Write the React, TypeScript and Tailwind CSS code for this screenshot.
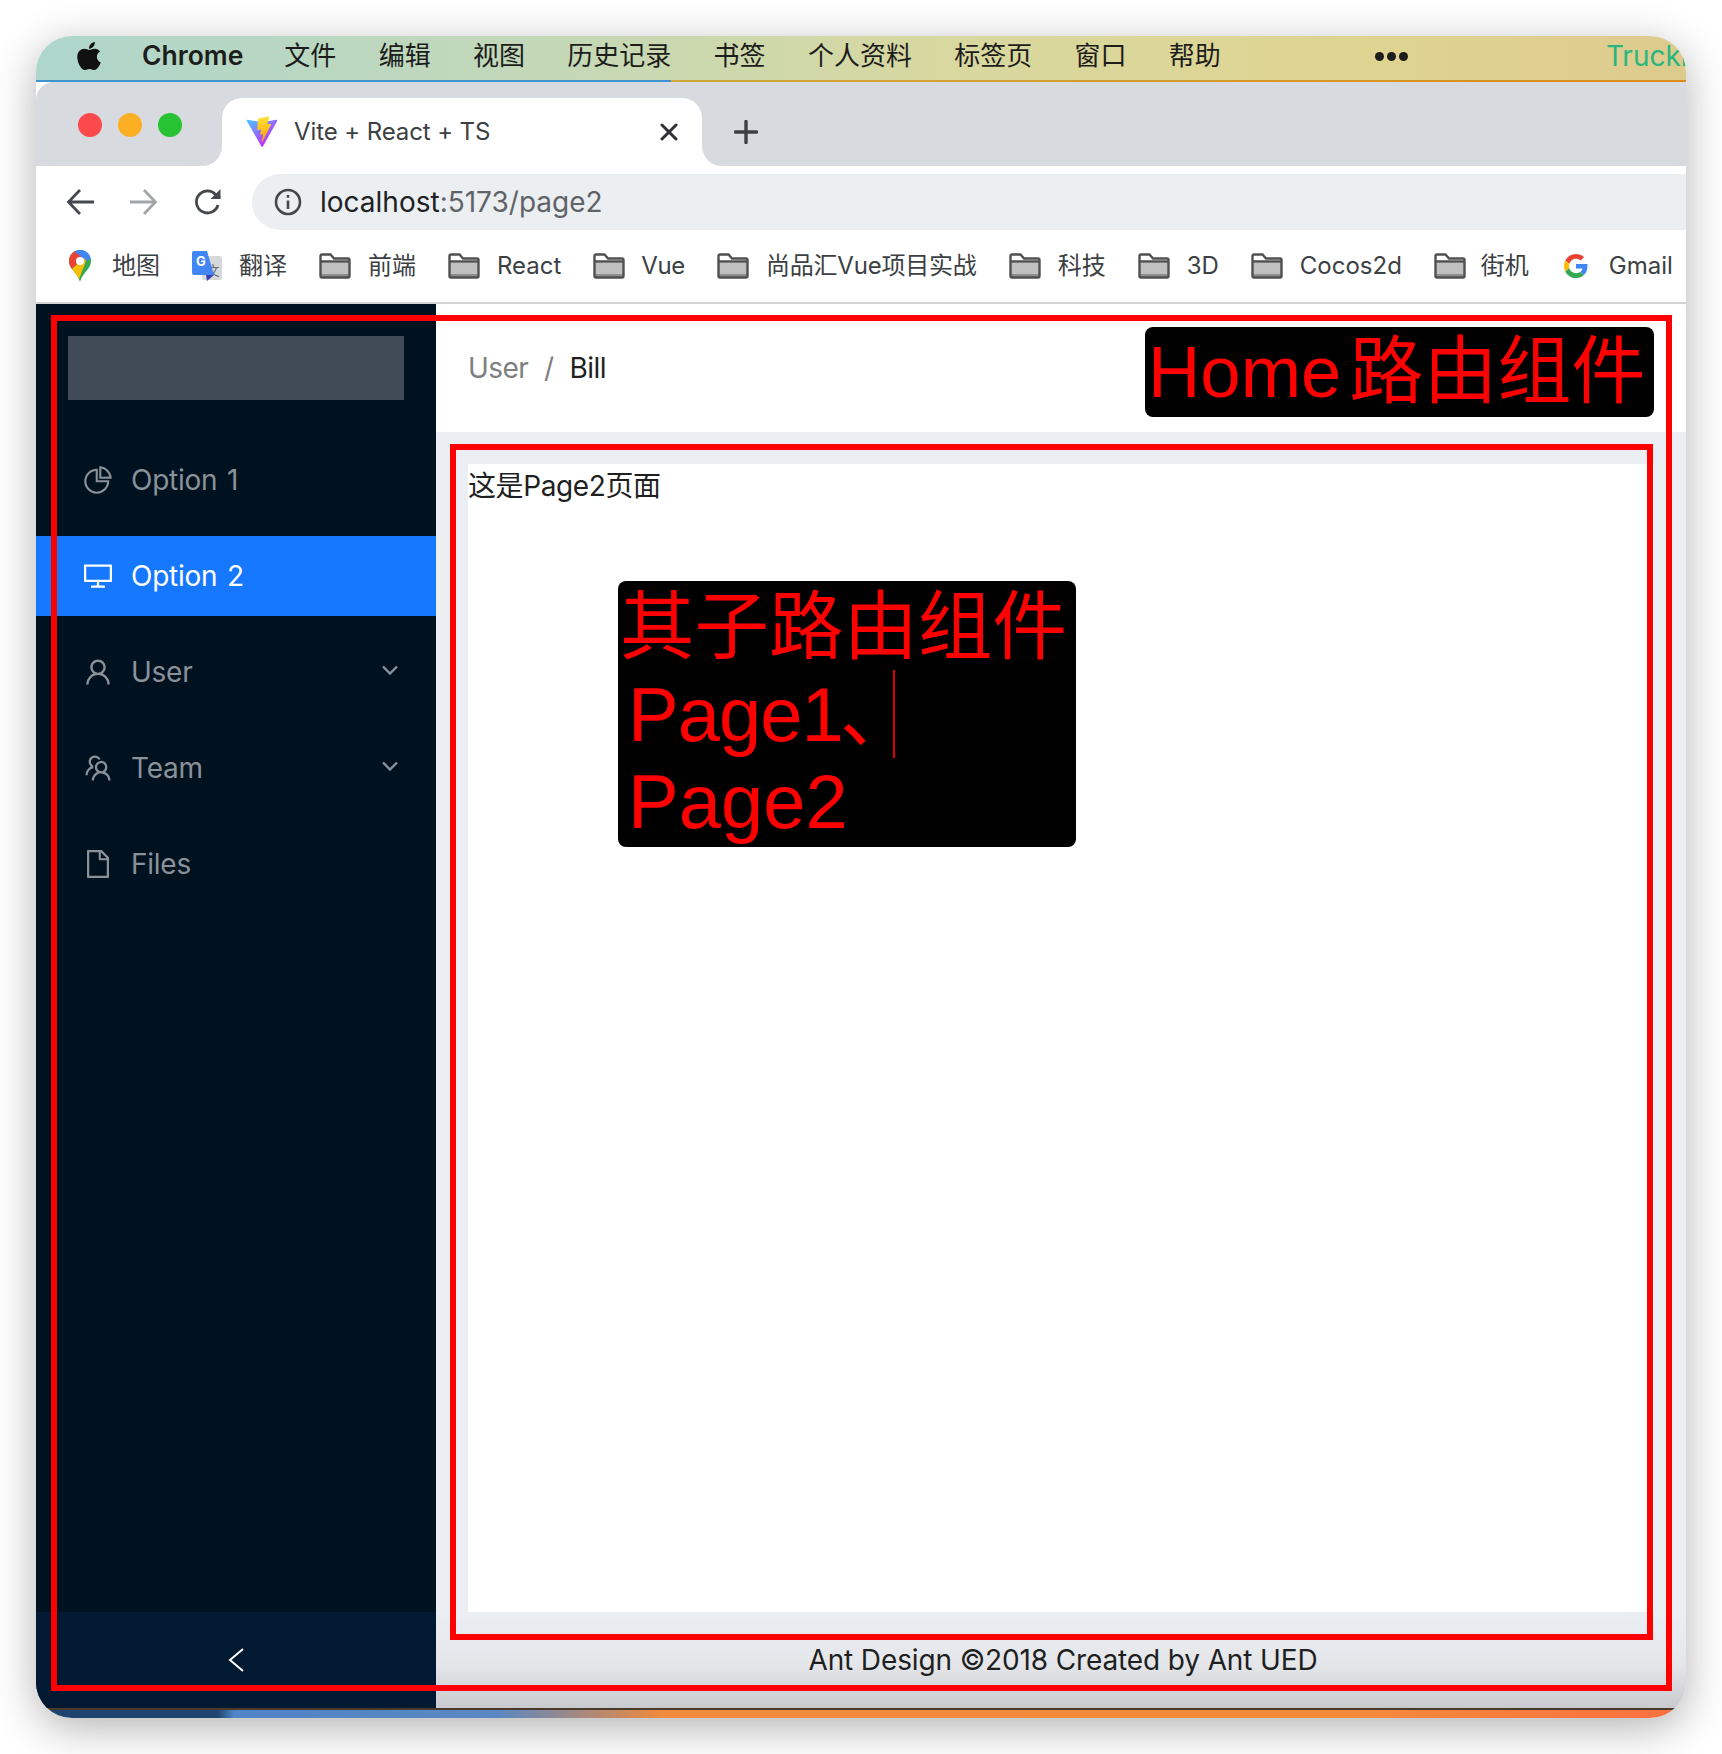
import { ReactNode } from 'react'
import { AiOutlineDesktop, AiOutlineFile, AiOutlinePieChart, AiOutlineTeam, AiOutlineUser } from 'react-icons/ai'
import { FaApple } from 'react-icons/fa'

const menuItems = ['文件', '编辑', '视图', '历史记录', '书签', '个人资料', '标签页', '窗口', '帮助']

function ViteLogo() {
  return (
    <svg viewBox="0 0 410 404" className="w-[32px] h-[32px]" fill="none">
      <defs>
        <linearGradient id="viteA" x1="6" y1="33" x2="235" y2="344" gradientUnits="userSpaceOnUse">
          <stop stopColor="#41D1FF" />
          <stop offset="1" stopColor="#BD34FE" />
        </linearGradient>
        <linearGradient id="viteB" x1="194.6" y1="8.8" x2="236" y2="292.9" gradientUnits="userSpaceOnUse">
          <stop stopColor="#FFEA83" />
          <stop offset="0.08" stopColor="#FFDD35" />
          <stop offset="1" stopColor="#FFA800" />
        </linearGradient>
      </defs>
      <path
        d="M399.641 59.5246L215.643 388.545C211.844 395.338 202.084 395.378 198.228 388.618L10.5817 59.5563C6.38087 52.1896 12.6802 43.2665 21.0281 44.7586L205.223 77.6824C206.398 77.8924 207.601 77.8904 208.776 77.6763L389.119 44.8058C397.439 43.2894 403.768 52.1434 399.641 59.5246Z"
        fill="url(#viteA)"
      />
      <path
        d="M292.965 1.5744L156.801 28.2552C154.563 28.6937 152.906 30.5903 152.771 32.8664L144.395 174.33C144.198 177.662 147.258 180.248 150.51 179.498L188.42 170.749C191.967 169.931 195.172 173.055 194.443 176.622L183.18 231.775C182.422 235.487 185.907 238.661 189.532 237.56L212.947 230.446C216.577 229.344 220.065 232.527 219.297 236.242L201.398 322.875C200.278 328.294 207.486 331.249 210.492 326.603L212.5 323.5L323.454 102.072C325.312 98.3645 322.108 94.137 318.036 94.9228L279.014 102.454C275.347 103.161 272.227 99.746 273.262 96.1583L298.731 7.86689C299.767 4.27314 296.636 0.855181 292.965 1.5744Z"
        fill="url(#viteB)"
      />
    </svg>
  )
}

function MapsPin() {
  return (
    <svg viewBox="0 0 22 32" className="w-[22px] h-[32px]">
      <defs>
        <clipPath id="pinClip">
          <path d="M11 0C4.9 0 0 4.9 0 11c0 3.2 1.2 5.6 3 8 3 3.8 6.2 7 8 13 1.8-6 5-9.2 8-13 1.8-2.4 3-4.8 3-8C22 4.9 17.1 0 11 0z" />
        </clipPath>
      </defs>
      <g clipPath="url(#pinClip)">
        <rect width="22" height="32" fill="#34A853" />
        <path d="M3 -1H24V7L16 12L8 6z" fill="#4285F4" />
        <path d="M-1 3L3 -1L9 4L14 9L3 19L-1 16z" fill="#EA4335" />
        <path d="M3 19L15 8L17 11L9 32H3z" fill="#FBBC05" />
        <path d="M17 7L24 3V-1H12L7 3z" fill="#4285F4" />
      </g>
      <circle cx="11" cy="11" r="4" fill="#fff" />
    </svg>
  )
}

function TranslateIcon() {
  return (
    <svg viewBox="0 0 30 30" className="w-[30px] h-[30px]">
      <rect x="10" y="5" width="20" height="24" rx="2" fill="#d6d8da" />
      <text x="21" y="24" fontSize="13" textAnchor="middle" fill="#5f6b73" fontFamily="'Noto Sans CJK SC', sans-serif">
        文
      </text>
      <path d="M2 0H15L22 24H2a2 2 0 0 1-2-2V2a2 2 0 0 1 2-2z" fill="#4285F4" />
      <path d="M14 24H22L15 30z" fill="#3B3FB5" />
      <text x="9" y="15" fontSize="13" fontWeight="700" textAnchor="middle" fill="#fff" fontFamily="Inter, sans-serif">
        G
      </text>
    </svg>
  )
}

function FolderIcon() {
  return (
    <svg viewBox="0 0 32 26" className="w-[32px] h-[26px] shrink-0">
      <path d="M2 10H30V23a1.5 1.5 0 0 1-1.5 1.5H3.500A1.500 1.500 0 0 1 2 23z" fill="#c0c0c0" />
      <path d="M2 21H30V24H2z" fill="#8e8e8e" />
      <path
        d="M1.500 8.500V3A1.500 1.500 0 0 1 3 1.500H11.500L15 5.500H29A1.500 1.500 0 0 1 30.500 7V23A1.500 1.500 0 0 1 29 24.500H3A1.500 1.500 0 0 1 1.500 23V8.500H30.500"
        fill="none"
        stroke="#505050"
        strokeWidth="2.400"
      />
    </svg>
  )
}

function GoogleG() {
  return (
    <svg viewBox="0 0 48 48" className="ml-[3px] w-[24px] h-[24px]">
      <path fill="#EA4335" d="M24 9.5c3.54 0 6.71 1.22 9.21 3.6l6.85-6.85C35.9 2.38 30.47 0 24 0 14.62 0 6.51 5.38 2.56 13.22l7.98 6.19C12.43 13.72 17.74 9.5 24 9.5z" />
      <path fill="#4285F4" d="M46.98 24.55c0-1.57-.15-3.09-.38-4.55H24v9.02h12.94c-.58 2.96-2.26 5.48-4.78 7.18l7.73 6c4.51-4.18 7.09-10.36 7.09-17.65z" />
      <path fill="#FBBC05" d="M10.53 28.59c-.48-1.45-.76-2.99-.76-4.59s.27-3.14.76-4.59l-7.98-6.19C.92 16.46 0 20.12 0 24c0 3.88.92 7.54 2.56 10.78l7.97-6.19z" />
      <path fill="#34A853" d="M24 48c6.48 0 11.93-2.13 15.89-5.81l-7.73-6c-2.15 1.45-4.92 2.3-8.16 2.3-6.26 0-11.57-4.22-13.47-9.91l-7.98 6.19C6.51 42.62 14.62 48 24 48z" />
    </svg>
  )
}

function Bookmark({ icon, label, labelClass = 'ml-[17px]' }: { icon: ReactNode; label: string; labelClass?: string }) {
  return (
    <div className="flex items-center shrink-0">
      {icon}
      <span className={`${labelClass} text-[24px] leading-[32px] text-[#3c4043] whitespace-nowrap`}>{label}</span>
    </div>
  )
}

function SideItem({ icon, label, active, arrow }: { icon: ReactNode; label: string; active?: boolean; arrow?: boolean }) {
  return (
    <div
      className={
        active
          ? 'flex items-center h-[80px] pl-[46px] gap-[17px] bg-[#1677ff] text-white'
          : 'flex items-center h-[80px] pl-[46px] gap-[17px] text-[#8a9199]'
      }
    >
      <span className="text-[32px] w-[32px] h-[32px] flex items-center justify-center">{icon}</span>
      <span className="text-[28px] leading-[44px] tracking-[-0.25px] [word-spacing:2px]">{label}</span>
      {arrow && (
        <svg viewBox="0 0 16 10" className="ml-auto mr-[38px] w-[16px] h-[10px] -mt-[4px]" fill="none" stroke="#8a9199" strokeWidth="2.400">
          <path d="M1 1.500L8 8.500L15 1.500" />
        </svg>
      )}
    </div>
  )
}

export default function App() {
  return (
    <div className="w-[1722px] h-[1754px] bg-white overflow-hidden pt-[36px] pl-[36px] font-['Inter','Noto_Sans_CJK_SC',sans-serif]">
      <div className="relative w-[1650px] h-[1682px] rounded-[36px] overflow-hidden flex flex-col shadow-[0_10px_44px_rgba(0,0,0,0.3)] bg-white">
        {/* Mac menu bar */}
        <div className="h-[44px] shrink-0 flex items-center overflow-hidden pb-[4px] text-[#1d1d1b] bg-[linear-gradient(90deg,#aed6cc_0%,#c3d8b8_30%,#d8d8a0_55%,#dfd491_80%,#ddcb8e_100%)]">
          <FaApple className="ml-[38px] w-[30px] h-[32px] shrink-0 text-[#111]" />
          <span className="ml-[38px] text-[26.500px] font-semibold mr-[41px] shrink-0">Chrome</span>
          <div className="flex shrink-0 gap-[42.3px] text-[26px] leading-[36px] whitespace-nowrap">
            {menuItems.map((item) => (
              <span key={item}>{item}</span>
            ))}
          </div>
          <div className="ml-[154px] flex shrink-0 gap-[3px]">
            <span className="w-[9px] h-[9px] rounded-full bg-[#1d1d1b]" />
            <span className="w-[9px] h-[9px] rounded-full bg-[#1d1d1b]" />
            <span className="w-[9px] h-[9px] rounded-full bg-[#1d1d1b]" />
          </div>
          <span className="ml-[198px] shrink-0 text-[28px] text-[#2bb67f] whitespace-nowrap">Trucki</span>
        </div>
        <div className="h-[2px] shrink-0 bg-[linear-gradient(90deg,#3f93d0_0%,#3f93d0_38.500%,#cfa93a_38.500%,#dc8a1c_100%)]" />

        {/* Tab strip */}
        <div className="h-[84px] shrink-0 bg-[#d7dade] rounded-tl-[18px] flex items-end">
          <div className="flex gap-[16px] ml-[42px] mb-[29px]">
            <span className="w-[24px] h-[24px] rounded-full bg-[#fc4a4c]" />
            <span className="w-[24px] h-[24px] rounded-full bg-[#fdb024]" />
            <span className="w-[24px] h-[24px] rounded-full bg-[#27c332]" />
          </div>
          <div className="relative ml-[40px] w-[480px] h-[68px] bg-white rounded-t-[20px] flex items-center pl-[24px]">
            <span className="absolute -left-[20px] bottom-0 w-[20px] h-[20px] bg-white">
              <span className="block w-[20px] h-[20px] bg-[#d7dade] rounded-br-[20px]" />
            </span>
            <span className="absolute -right-[20px] bottom-0 w-[20px] h-[20px] bg-white">
              <span className="block w-[20px] h-[20px] bg-[#d7dade] rounded-bl-[20px]" />
            </span>
            <ViteLogo />
            <span className="ml-[16px] text-[24px] leading-[32px] tracking-[-0.1px] text-[#3c4043]">Vite + React + TS</span>
            <svg viewBox="0 0 18 18" className="ml-auto mr-[24px] w-[18px] h-[18px]" stroke="#303134" strokeWidth="3" strokeLinecap="round">
              <path d="M2 2L16 16M16 2L2 16" />
            </svg>
          </div>
          <svg viewBox="0 0 24 24" className="ml-[32px] mb-[22px] w-[24px] h-[24px]" stroke="#3c4043" strokeWidth="3.400" strokeLinecap="round">
            <path d="M12 1.500V22.500M1.500 12H22.500" />
          </svg>
        </div>

        {/* Toolbar */}
        <div className="h-[64px] shrink-0 bg-white flex items-center pt-[8px]">
          <svg viewBox="0 0 28 26" className="ml-[30px] w-[28px] h-[26px]" fill="none" stroke="#45494d" strokeWidth="2.800">
            <path d="M28 13H3M14 1L2.500 13L14 25" />
          </svg>
          <svg viewBox="0 0 28 26" className="ml-[36px] w-[28px] h-[26px]" fill="none" stroke="#a3a6a9" strokeWidth="2.800">
            <path d="M0 13H25M14 1L25.500 13L14 25" />
          </svg>
          <svg viewBox="0 0 28 28" className="ml-[36px] w-[28px] h-[28px]" fill="none" stroke="#45494d" strokeWidth="2.800">
            <path d="M24 17a11 11 0 1 1-2.500-10.500L26 10" />
            <path d="M26.500 1V11H16.500" fill="#45494d" stroke="none" />
          </svg>
          <div className="ml-[30px] flex-1 h-[56px] bg-[#eceff1] rounded-l-[28px] flex items-center pl-[22px]">
            <svg viewBox="0 0 28 28" className="w-[28px] h-[28px]" fill="none" stroke="#45494d" strokeWidth="2.600">
              <circle cx="14" cy="14" r="12" />
              <path d="M14 12.500V21" />
              <path d="M14 7V9.800" />
            </svg>
            <span className="ml-[18px] text-[28px] leading-[40px] text-[#5f6368]">
              <span className="text-[#202124]">localhost</span>:5173/page2
            </span>
          </div>
        </div>

        {/* Bookmarks */}
        <div className="h-[72px] shrink-0 bg-white flex items-center gap-[32px] pl-[33px] overflow-hidden">
          <Bookmark icon={<MapsPin />} label="地图" labelClass="ml-[21px]" />
          <Bookmark icon={<TranslateIcon />} label="翻译" />
          <Bookmark icon={<FolderIcon />} label="前端" />
          <Bookmark icon={<FolderIcon />} label="React" />
          <Bookmark icon={<FolderIcon />} label="Vue" labelClass="ml-[16px] tracking-[-0.4px]" />
          <Bookmark icon={<FolderIcon />} label="尚品汇Vue项目实战" labelClass="ml-[17px] tracking-[-0.2px]" />
          <Bookmark icon={<FolderIcon />} label="科技" />
          <Bookmark icon={<FolderIcon />} label="3D" />
          <Bookmark icon={<FolderIcon />} label="Cocos2d" />
          <Bookmark icon={<FolderIcon />} label="街机" labelClass="ml-[15px]" />
          <Bookmark icon={<GoogleG />} label="Gmail" labelClass="ml-[21px]" />
        </div>
        <div className="h-[2px] shrink-0 bg-[#d3d4d6]" />

        {/* Page */}
        <div className="flex-1 flex min-h-0">
          <aside className="w-[400px] shrink-0 bg-[#00121f] flex flex-col">
            <div className="mt-[32px] ml-[32px] w-[336px] h-[64px] bg-[#404b57]" />
            <nav className="mt-[40px] flex-1 flex flex-col gap-[16px]">
              <SideItem icon={<AiOutlinePieChart />} label="Option 1" />
              <SideItem icon={<AiOutlineDesktop />} label="Option 2" active />
              <SideItem icon={<AiOutlineUser />} label="User" arrow />
              <SideItem icon={<AiOutlineTeam />} label="Team" arrow />
              <SideItem icon={<AiOutlineFile />} label="Files" />
            </nav>
            <div className="h-[96px] bg-[#011a32] flex items-center justify-center">
              <svg viewBox="0 0 16 24" className="w-[16px] h-[24px]" fill="none" stroke="#fff" strokeWidth="2">
                <path d="M15 1L2 12L15 23" />
              </svg>
            </div>
          </aside>
          <div className="flex-1 flex flex-col bg-[#ebeef3] min-w-0">
            <header className="h-[128px] shrink-0 bg-white flex items-center pl-[32px] pr-[32px]">
              <div className="flex text-[28px] leading-[44px] tracking-[-0.6px] text-[#7f7f7f]">
                <span>User</span>
                <span className="mx-[16px]">/</span>
                <span className="text-[#1f1f1f]">Bill</span>
              </div>
              <div className="ml-auto mt-[8px] w-[509px] h-[90px] bg-black rounded-[8px] flex items-center pl-[3px] font-['Liberation_Sans','Noto_Sans_CJK_SC',sans-serif] text-[72.500px] leading-[90px] text-[#ff0000] whitespace-nowrap">
                <span>Home</span>
                <span className="ml-[8px] text-[74px]">路由组件</span>
              </div>
            </header>
            <main className="flex-1 mx-[32px] mt-[32px] bg-white min-h-0">
              <p className="text-[28px] leading-[44px] tracking-[-0.4px] text-[#1f1f1f]">这是Page2页面</p>
              <div className="relative mt-[73px] ml-[150px] w-[458px] h-[266px] bg-black rounded-[8px] font-['Liberation_Sans','Noto_Sans_CJK_SC',sans-serif] leading-[87px] text-[#ff0000]">
                <p className="pt-[3px] pl-[2px] text-[74.500px] whitespace-nowrap">其子路由组件</p>
                <p className="pl-[10px] text-[76px] whitespace-nowrap">
                  <span className="tracking-[-1px]">Page1</span>
                  <span className="-ml-[3px]">、</span>
                </p>
                <p className="pl-[10px] text-[76px] whitespace-nowrap">Page2</p>
                <span className="absolute left-[275px] top-[89px] w-[2px] h-[88px] bg-[#e00000]" />
              </div>
            </main>
            <footer className="h-[96px] shrink-0 flex items-center justify-center pl-[4px] text-[28px] leading-[44px] tracking-[-0.13px] text-[#1f1f1f] bg-[linear-gradient(180deg,#ebeef3_0%,#e4e6ea_55%,#c9cacd_100%)]">
              Ant Design ©2018 Created by Ant UED
            </footer>
          </div>
        </div>

        {/* Wallpaper showing under the window */}
        <div className="h-[10px] shrink-0 border-t-[2px] border-[#4a3a2c] bg-[linear-gradient(90deg,#1f4470_0%,#1f4470_11%,#4f84c6_12%,#5b88c2_28%,#f08a3c_38%,#f38a3c_80%,#fb6f41_100%)]" />

        {/* Red annotation frames */}
        <div className="absolute left-[15px] top-[279px] w-[1621px] h-[1376px] border-[6px] border-[#ff0000] pointer-events-none" />
        <div className="absolute left-[414px] top-[408px] w-[1203px] h-[1196px] border-[6px] border-[#ff0000] pointer-events-none" />
      </div>
    </div>
  )
}
